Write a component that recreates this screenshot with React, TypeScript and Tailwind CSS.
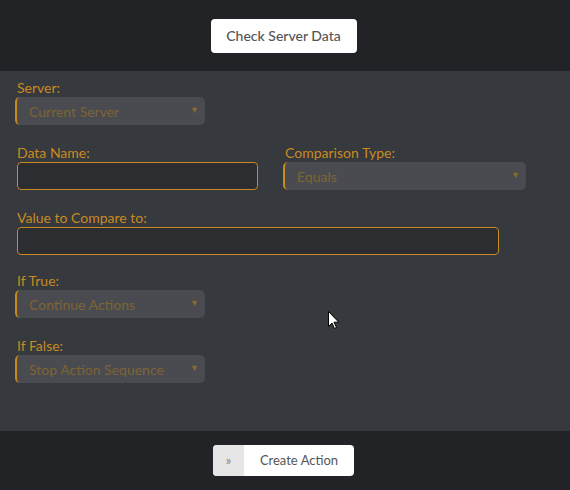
import React from "react";

const font = { fontFamily: "Lato, 'Open Sans', sans-serif" };

function Label({ children }: { children: React.ReactNode }) {
  return (
    <div className="h-[18px] pl-[2px] text-[14px] leading-[18px] text-[#c98a20]">
      {children}
    </div>
  );
}

function Select({ value, width }: { value: string; width: string }) {
  return (
    <div
      className={`relative flex h-[28px] items-center rounded-[5px] border-l-2 border-[#c98a20] bg-[#4a4b50] pl-[12px] text-[14px] text-[#7d6433] ${width}`}
    >
      {value}
      <span className="absolute right-[6px] top-[8px] text-[9px] leading-none text-[#8a6a2e]">
        ▼
      </span>
    </div>
  );
}

function Input({ width }: { width: string }) {
  return (
    <div
      className={`ml-[2px] h-[28px] rounded-[4px] border border-[#c98a20] bg-[#2c2d31] ${width}`}
    />
  );
}

export default function App() {
  return (
    <div className="flex h-[490px] w-[570px] flex-col bg-[#36393e]" style={font}>
      <div className="flex h-[71px] items-center justify-center bg-[#222327] pr-[3px]">
        <button className="h-[34px] w-[146px] rounded-[4px] bg-white text-[14px] font-medium text-[#555]">
          Check Server Data
        </button>
      </div>

      <div className="relative h-[360px] pl-[15px] pt-[8px]">
        <Label>Server:</Label>
        <Select value="Current Server" width="w-[190px]" />

        <div className="mt-[19px] flex">
          <div className="w-[268px]">
            <Label>Data Name:</Label>
            <Input width="w-[241px]" />
          </div>
          <div>
            <Label>Comparison Type:</Label>
            <Select value="Equals" width="w-[243px]" />
          </div>
        </div>

        <div className="mt-[19px]">
          <Label>Value to Compare to:</Label>
          <Input width="w-[482px]" />
        </div>

        <div className="mt-[17px]">
          <Label>If True:</Label>
          <Select value="Continue Actions" width="w-[190px]" />
        </div>

        <div className="mt-[19px]">
          <Label>If False:</Label>
          <Select value="Stop Action Sequence" width="w-[190px]" />
        </div>

        {/* mouse pointer */}
        <svg
          className="absolute left-[328px] top-[240px]"
          width="12"
          height="19"
          viewBox="0 0 12 19"
        >
          <path
            d="M0.5 0.5 L0.5 15.5 L4 12 L6.5 17.5 L8.5 16.5 L6 11.2 L10.8 11.2 Z"
            fill="white"
            stroke="black"
            strokeWidth="1"
          />
        </svg>
      </div>

      <div className="flex flex-1 items-start justify-center bg-[#222327] pr-[3px] pt-[14px]">
        <div className="flex h-[31px] w-[141px] overflow-hidden rounded-[4px] bg-white text-[13px] text-[#555]">
          <div className="flex w-[31px] items-center justify-center bg-[#e6e6e6] text-[#888]">
            »
          </div>
          <div className="flex flex-1 items-center justify-center">Create Action</div>
        </div>
      </div>
    </div>
  );
}
